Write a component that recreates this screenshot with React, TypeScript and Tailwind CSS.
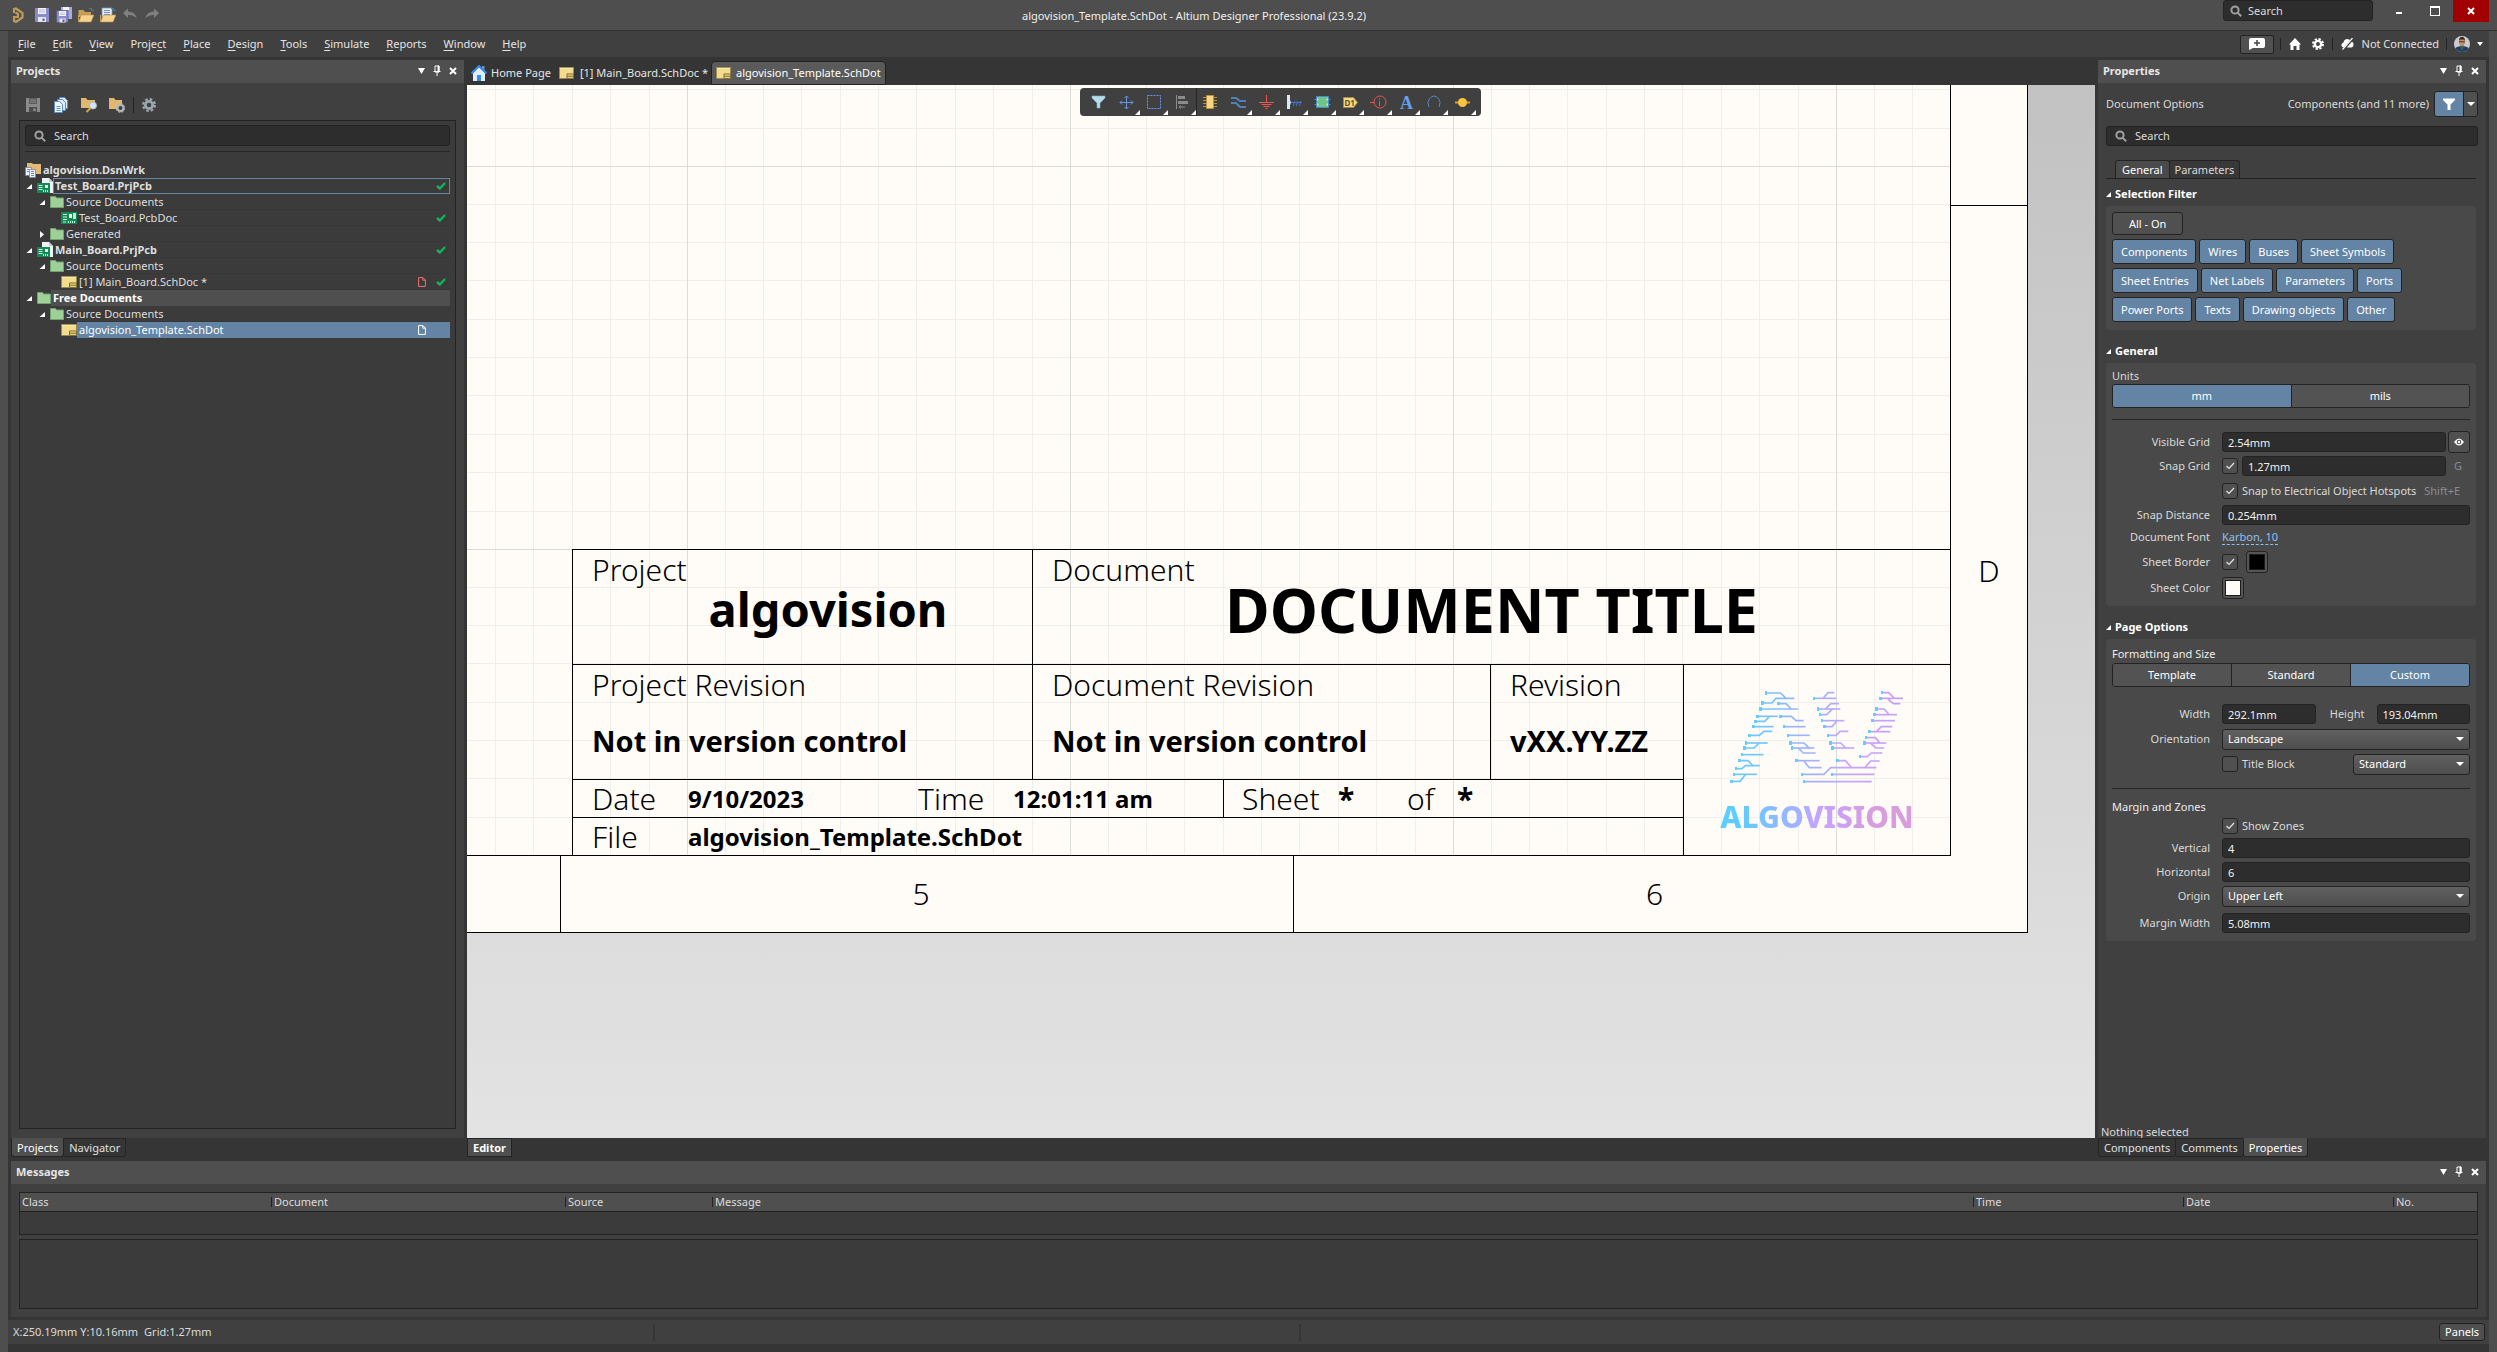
import { useId, useState, type ReactNode } from "react";

/* ---------- small glyphs ---------- */

function Caret({ className = "w-2 h-1.5" }: { className?: string }) {
  return (
    <svg className={className} viewBox="0 0 8 5" preserveAspectRatio="none">
      <path d="M0 0h8L4 5z" fill="#fff" />
    </svg>
  );
}

function Pin() {
  return (
    <svg className="h-3 w-2" viewBox="0 0 8 12">
      <path d="M2 1h4v6H2zM0.500 6.500h7M4 7v4" fill="none" stroke="#fff" />
      <path d="M5 1h1v6H5z" fill="#fff" stroke="#fff" />
    </svg>
  );
}

function Cross({ className = "size-2" }: { className?: string }) {
  return (
    <svg className={className} viewBox="0 0 8 8">
      <path d="M1 1l6 6M7 1L1 7" stroke="#fff" strokeWidth="2" />
    </svg>
  );
}

function SearchIcon({ color = "#a0a0a0" }: { color?: string }) {
  return (
    <svg className="size-3 shrink-0" viewBox="0 0 12 12" fill="none" stroke={color} strokeWidth="2">
      <circle cx="5" cy="5" r="3.600" />
      <path d="M7.600 7.600l3.600 3.600" />
    </svg>
  );
}

function Arrow({ open }: { open: boolean }) {
  return (
    <svg className="size-[7px] shrink-0" viewBox="0 0 7 7">
      <path d={open ? "M6 1v5H0.500z" : "M1 0l4 3.500L1 7z"} fill="#fff" />
    </svg>
  );
}

function Floppy({ gray = false }: { gray?: boolean }) {
  return (
    <svg className="size-4" viewBox="0 0 16 16">
      <path d="M1 1h14v14H1z" fill={gray ? "#8a8a8a" : "#8a8bc8"} />
      <path d="M4 1h8v6H4z" fill={gray ? "#5c5c5c" : "#f2f2f8"} />
      <path d="M5 3h6M5 5h6" stroke={gray ? "#8a8a8a" : "#b9b9d6"} />
      <path d="M4 10h8v5H4z" fill={gray ? "#4d4d4d" : "#e4e4f2"} />
      <path d="M8.500 11.500h2V14h-2z" fill={gray ? "#9a9a9a" : "#5e5f9c"} />
    </svg>
  );
}

function FloppyStack() {
  return (
    <svg className="size-4" viewBox="0 0 16 16">
      <path d="M5 0h11v12H5z" fill="#a9aae0" />
      <path d="M7 0h6v3H7z" fill="#f2f2f8" />
      <path d="M0.500 3.500h11.500v12H0.500z" fill="#8a8bc8" stroke="#4d4d6c" strokeWidth="0.600" />
      <path d="M3 4h7v5H3z" fill="#f2f2f8" />
      <path d="M4 6h5M4 7.500h5" stroke="#b9b9d6" strokeWidth="0.800" />
      <path d="M3.500 11.500h6v4h-6z" fill="#e4e4f2" />
      <path d="M6.500 12.500h2V15h-2z" fill="#5e5f9c" />
    </svg>
  );
}

function OpenFolder({ doc = false }: { doc?: boolean }) {
  return (
    <svg className="size-4" viewBox="0 0 16 16">
      {doc ? (
        <>
          <path d="M2 1h10v10H2z" fill="#e8eef8" stroke="#8296b8" strokeWidth="0.800" />
          <path d="M4 3.500h6M4 5.500h6M4 7.500h6" stroke="#6f8fbf" />
        </>
      ) : (
        <path d="M0.500 3h5l1.500 2h6v5h-12.500z" fill="#c99d55" />
      )}
      <path d="M3.500 8H16l-3 7H0.500z" fill="#f5d38f" stroke="#b88d45" strokeWidth="0.600" />
      <path d="M0.500 8v7" stroke="#c99d55" />
      <path d="M11 1.500q3 -1 3.500 2M12.800 2.500l1.700 1.500L16 2.500" fill="none" stroke="#4c7da6" />
    </svg>
  );
}

function Undo({ flip = false }: { flip?: boolean }) {
  return (
    <svg className={flip ? "size-4 -scale-x-100" : "size-4"} viewBox="0 0 16 16">
      <path d="M1 6l5-4.500V4.500q7 0 9 7q-4-4-9-3.500V11z" fill="#808080" />
    </svg>
  );
}

function AltiumMark() {
  return (
    <svg className="h-4 w-3" viewBox="0 0 12 16" fill="none" stroke="#bf9b5a" strokeWidth="2.200">
      <path d="M2 6V2l2-0.500 6.500 4.500v4.500L4 15l-2-1v-4h4V7L3.500 5.500" />
    </svg>
  );
}

function SchDocIcon({ className = "h-3.5 w-4" }: { className?: string }) {
  return (
    <svg className={className} viewBox="0 0 16 13" preserveAspectRatio="none">
      <path d="M0.500 0.500h15v12h-15z" fill="#f3dc8c" stroke="#9c8a52" />
      <path d="M1 1h14v1H1z" fill="#faecb5" />
      <path d="M8.500 7.500h7v5h-7zM8.500 10h7" fill="#e8cf78" stroke="#7d6c38" />
    </svg>
  );
}

function PcbIcon() {
  return (
    <svg className="h-3 w-4 shrink-0" viewBox="0 0 16 12">
      <path d="M0 0h16v12H0z" fill="#0f8b54" />
      <path d="M2 2.500h4M2 5h4M2 7.500h4M2 10h3" stroke="#d8f2e2" />
      <path d="M8 2h3v4H8z" fill="#e8f4ec" />
      <path d="M12 1h3v6h-3z" fill="#c2e8d2" />
      <path d="M7.500 9v2M9.500 9v2M11.500 9v2M13.500 9v2" stroke="#d8f2e2" />
    </svg>
  );
}

function PrjIcon() {
  return (
    <svg className="size-4 shrink-0" viewBox="0 0 16 16">
      <path d="M5 0h7l4 4v11H5z" fill="#eef1f6" />
      <path d="M12 0v4h4" fill="#c2c9d6" />
      <path d="M0 5h13v10H0z" fill="#0f8b54" />
      <path d="M1.500 7.500h4M1.500 9.500h4M1.500 11.500h4" stroke="#d8f2e2" />
      <path d="M8 7h3v3H8z" fill="#e8f4ec" />
      <path d="M6.500 12v2M8.500 12v2M10.500 12v2" stroke="#d8f2e2" />
    </svg>
  );
}

function WorkspaceIcon() {
  return (
    <svg className="size-4 shrink-0" viewBox="0 0 16 16">
      <path d="M2 1h5l1 1h8v10H2z" fill="#e5b877" />
      <path d="M0.500 5.500h6v8h-6z" fill="#eef2f8" stroke="#6d86aa" strokeWidth="0.800" />
      <path d="M4.500 7.500h6v8h-6z" fill="#eef2f8" stroke="#6d86aa" strokeWidth="0.800" />
      <path d="M6 9.500h3M6 11.500h3M6 13.500h3M2 7.500h2M2 9.500h2" stroke="#6d86aa" />
    </svg>
  );
}

function GreenFolder() {
  return (
    <svg className="h-3 w-3.5 shrink-0" viewBox="0 0 14 12">
      <path d="M0.500 0.500h5l1 1.500h7v9.500h-13z" fill="#9fd09a" stroke="#6fa46d" />
    </svg>
  );
}

function GreenCheck() {
  return (
    <svg className="h-2 w-2.5 shrink-0" viewBox="0 0 10 8">
      <path d="M1 4l2.800 2.500L9 1" fill="none" stroke="#14b35c" strokeWidth="2.400" />
    </svg>
  );
}

function PageGlyph({ color }: { color: string }) {
  return (
    <svg className="h-2.5 w-2 shrink-0" viewBox="0 0 8 10">
      <path d="M0.600 0.600H5L7.400 3v6.400H0.600zM4.800 0.600V3.200h2.600" fill="none" stroke={color} />
    </svg>
  );
}

function GearShape({ color, className = "size-3" }: { color: string; className?: string }) {
  return (
    <svg className={className} viewBox="0 0 16 16">
      <circle cx="8" cy="8" r="6.700" fill="none" stroke={color} strokeWidth="2.600" strokeDasharray="3 2.260" />
      <circle cx="8" cy="8" r="4.200" fill="none" stroke={color} strokeWidth="3.200" />
    </svg>
  );
}

function FilterGlyph({ color = "#fff", className = "size-3" }: { color?: string; className?: string }) {
  return (
    <svg className={className} viewBox="0 0 12 12">
      <path d="M0 0.500h12v1.500L7.500 6.500V12h-3V6.500L0 2z" fill={color} />
    </svg>
  );
}

/* ---------- shared pieces ---------- */

function PanelHeader({ title }: { title: string }) {
  return (
    <header className="flex h-[23px] shrink-0 items-center justify-between bg-[#4f4f4f] pb-0.5 pl-[5px] pr-[7px]">
      <h2 className="font-bold text-[#e6e6e6]">{title}</h2>
      <div className="flex items-center gap-2">
        <button aria-label="Panel menu"><Caret className="h-1.5 w-[7px]" /></button>
        <button aria-label="Pin panel"><Pin /></button>
        <button aria-label="Close panel"><Cross /></button>
      </div>
    </header>
  );
}

function SearchBox({ label, className }: { label: string; className: string }) {
  return (
    <label className={"flex items-center gap-2 rounded-[3px] border border-[#222] bg-[#2d2d2d] px-2 " + className}>
      <SearchIcon />
      <input aria-label={label} placeholder="Search" className="min-w-0 flex-1 bg-transparent outline-none placeholder:text-[#dcdcdc]" />
    </label>
  );
}

function BottomTabs({ tabs, active }: { tabs: string[]; active: string }) {
  return (
    <div className="flex h-[23px] shrink-0 items-start">
      {tabs.map((t) => (
        <button
          key={t}
          className={
            "-mr-px h-[19px] rounded-b-[3px] border border-[#242424] px-[5px] leading-[17px] " +
            (t === active ? "border-t-[#4f4f4f] bg-[#4f4f4f] text-white" : "bg-[#353535] text-[#e0e0e0]")
          }
        >
          {t}
        </button>
      ))}
    </div>
  );
}

/* ---------- title bar and menu ---------- */

const menus: [string, string, string][] = [
  ["", "F", "ile"], ["", "E", "dit"], ["", "V", "iew"], ["Proje", "c", "t"], ["", "P", "lace"], ["", "D", "esign"],
  ["", "T", "ools"], ["", "S", "imulate"], ["", "R", "eports"], ["", "W", "indow"], ["", "H", "elp"],
];

function TitleBar() {
  return (
    <header className="relative flex h-[31px] shrink-0 items-start justify-between border-b border-[#333] pl-3 pr-2">
      <div className="flex h-[30px] items-center gap-1.5">
        <button aria-label="Application menu" className="mr-1"><AltiumMark /></button>
        <button aria-label="Save"><Floppy /></button>
        <button aria-label="Save all"><FloppyStack /></button>
        <button aria-label="Open"><OpenFolder /></button>
        <button aria-label="Open project"><OpenFolder doc /></button>
        <button aria-label="Undo"><Undo /></button>
        <button aria-label="Redo"><Undo flip /></button>
      </div>
      <h1 className="pointer-events-none absolute inset-x-0 top-2 mr-[109px] text-center text-[#f0f0f0]">
        algovision_Template.SchDot - Altium Designer Professional (23.9.2)
      </h1>
      <div className="flex items-start">
        <SearchBox label="Search commands" className="h-[21px] w-[150px] !gap-1.5 !px-1.5" />
        <button aria-label="Minimize" className="ml-2 flex h-[22px] w-9 items-center justify-center pt-1">
          <span className="h-0.5 w-1.5 bg-white" />
        </button>
        <button aria-label="Maximize" className="flex h-[22px] w-9 items-center justify-center">
          <span className="h-2.5 w-2.5 border border-t-2 border-white" />
        </button>
        <button aria-label="Close" className="flex h-[22px] w-9 items-center justify-center bg-[#a00000]"><Cross /></button>
      </div>
    </header>
  );
}

function MenuBar() {
  return (
    <div className="flex h-[26px] shrink-0 items-center justify-between bg-[#404040] pl-2.5 pr-1.5">
      <nav className="flex gap-[17px] text-[#e4e4e4]">
        {menus.map(([a, u, b]) => (
          <button key={a + u + b}>
            {a}
            <span className="underline underline-offset-2">{u}</span>
            {b}
          </button>
        ))}
      </nav>
      <div className="flex items-center">
        <button aria-label="Feedback" className="flex h-[19px] w-[34px] items-center justify-center rounded-[2px] border border-[#222] bg-[#505050]">
          <svg className="h-3 w-4" viewBox="0 0 16 12">
            <path d="M2 0h12q2 0 2 2v6q0 2-2 2H4l-4 2V2q0-2 2-2z" fill="#fff" />
            <path d="M8 2v6M5 5h6" stroke="#444" strokeWidth="1.500" />
          </svg>
        </button>
        <span className="ml-1.5 h-3 w-px bg-[#222]" />
        <button aria-label="Home" className="ml-2">
          <svg className="size-3" viewBox="0 0 12 12">
            <path d="M6 0l6 6.500h-1.500V12H7.500V8h-3v4h-3V6.500H0z" fill="#fff" />
          </svg>
        </button>
        <button aria-label="Settings" className="ml-[11px]"><GearShape color="#fff" /></button>
        <span className="ml-2 h-3 w-px bg-[#222]" />
        <button className="ml-2 flex items-center gap-2 text-[#e0e0e0]">
          <svg className="h-3 w-[13px]" viewBox="0 0 13 12">
            <path d="M3 9.500Q0 9 0.500 6.500 1 5 2.500 4.500 3 1 6.500 1 9 1 9.500 3.500 12.500 3.500 12.500 6.500 12.500 9.500 10 9.500z" fill="#fff" />
            <path d="M12.500 0L2.500 11.500" stroke="#404040" strokeWidth="2.500" />
            <path d="M11.500 0L1.500 11.500" stroke="#fff" strokeWidth="1.200" />
          </svg>
          Not Connected
        </button>
        <span className="ml-[7px] h-3 w-px bg-[#222]" />
        <button aria-label="Account" className="ml-[7px] flex items-center gap-[7px]">
          <svg className="size-4" viewBox="0 0 16 16">
            <clipPath id="avatar"><circle cx="8" cy="8" r="8" /></clipPath>
            <g clipPath="url(#avatar)">
              <path d="M0 0h16v16H0z" fill="#c9cdd0" />
              <path d="M0 16q0-6 8-6t8 6z" fill="#243c66" />
              <path d="M6.500 9h3v3l-1.500 3-1.500-3z" fill="#2f6b4a" />
              <ellipse cx="8" cy="6" rx="3" ry="4" fill="#c98d6a" />
              <path d="M5 5q0-4 3-4t3 4l-1-1.500H6z" fill="#2b1f1a" />
              <path d="M5 5.800h6" stroke="#222" strokeWidth="0.800" />
            </g>
          </svg>
          <Caret className="h-1 w-1.5" />
        </button>
      </div>
    </div>
  );
}

/* ---------- projects panel ---------- */

type TreeRow = {
  label: string;
  indent: string;
  icon: ReactNode;
  arrow?: "open" | "closed";
  bold?: boolean;
  look?: "focus" | "group" | "selected";
  mark?: string;
  check?: boolean;
};

const tree: TreeRow[] = [
  { label: "algovision.DsnWrk", indent: "pl-0", icon: <WorkspaceIcon />, bold: true },
  { label: "Test_Board.PrjPcb", indent: "pl-px", icon: <PrjIcon />, arrow: "open", bold: true, look: "focus", check: true },
  { label: "Source Documents", indent: "pl-3.5", icon: <GreenFolder />, arrow: "open" },
  { label: "Test_Board.PcbDoc", indent: "pl-9", icon: <PcbIcon />, check: true },
  { label: "Generated", indent: "pl-3.5", icon: <GreenFolder />, arrow: "closed" },
  { label: "Main_Board.PrjPcb", indent: "pl-px", icon: <PrjIcon />, arrow: "open", bold: true, check: true },
  { label: "Source Documents", indent: "pl-3.5", icon: <GreenFolder />, arrow: "open" },
  { label: "[1] Main_Board.SchDoc *", indent: "pl-9", icon: <SchDocIcon className="h-3 w-4 shrink-0" />, mark: "#f07070", check: true },
  { label: "Free Documents", indent: "pl-px", icon: <GreenFolder />, arrow: "open", bold: true, look: "group" },
  { label: "Source Documents", indent: "pl-3.5", icon: <GreenFolder />, arrow: "open" },
  { label: "algovision_Template.SchDot", indent: "pl-9", icon: <SchDocIcon className="h-3 w-4 shrink-0" />, look: "selected", mark: "#ffffff" },
];

function TreeItem({ row }: { row: TreeRow }) {
  const look =
    row.look === "focus" ? "border-[#6485a5]"
    : row.look === "group" ? "border-[#4f4f4f] bg-[#4f4f4f] text-white"
    : row.look === "selected" ? "border-[#6384a4] bg-[#6384a4] text-white"
    : "border-transparent border-b-[#373737]";
  return (
    <li className={"flex h-4 items-center text-[#dedede] " + row.indent}>
      {row.arrow && <span className="mr-1 flex"><Arrow open={row.arrow === "open"} /></span>}
      {row.icon}
      <span className={"flex h-4 min-w-0 flex-1 items-center border pl-px pr-[3px] leading-[14px] " + look + (row.bold ? " font-bold" : "")}>
        <span className="flex-1">{row.label}</span>
        {row.mark && <PageGlyph color={row.mark} />}
        <span className="ml-2.5 flex w-2.5">{row.check && <GreenCheck />}</span>
      </span>
    </li>
  );
}

function ProjectsPanel() {
  return (
    <aside className="flex w-[453px] shrink-0 flex-col">
      <section className="flex flex-1 flex-col bg-[#404040]">
        <PanelHeader title="Projects" />
        <div className="flex h-[37px] items-center gap-3 pl-3.5 pt-1.5">
          <button aria-label="Save project"><Floppy gray /></button>
          <button aria-label="Compile">
            <svg className="size-4" viewBox="0 0 16 16">
              <path d="M6.500 0.500h5l3 3v8h-8z" fill="#dce9f8" stroke="#5b8fc4" />
              <path d="M4.500 2.500h5l3 3v8h-8z" fill="#dce9f8" stroke="#5b8fc4" />
              <path d="M1.500 4.500h5l3 3v8h-8z" fill="#f2f7fd" stroke="#5b8fc4" />
              <path d="M3.500 9.500h4M3.500 11.500h4M3.500 13.500h4" stroke="#5b8fc4" />
            </svg>
          </button>
          <button aria-label="Explore">
            <svg className="size-4" viewBox="0 0 16 16">
              <path d="M0 1h5l1.500 2H14v8H0z" fill="#e2b86e" />
              <circle cx="12" cy="8.500" r="3.500" fill="#d3e6f6" stroke="#a9bccb" />
              <path d="M9.500 11L5.500 15" stroke="#d6a24e" strokeWidth="2" />
            </svg>
          </button>
          <button aria-label="Project options">
            <svg className="size-4" viewBox="0 0 16 16">
              <path d="M0 1h5l1.500 2H13v9H0z" fill="#e2b86e" />
              <circle cx="11.500" cy="11" r="3" fill="#404040" stroke="#b4b9ba" strokeWidth="2" />
              <circle cx="11.500" cy="11" r="4.400" fill="none" stroke="#b4b9ba" strokeDasharray="2 1.500" />
            </svg>
          </button>
          <span className="-ml-1 h-4 w-px bg-[#222]" />
          <button aria-label="Panel settings" className="-ml-1"><GearShape color="#9aa6ad" className="size-3.5" /></button>
        </div>
        <div className="mx-2 mb-[9px] flex flex-1 flex-col border border-[#232323] bg-[#3b3b3b] px-[5px] pt-1">
          <SearchBox label="Search projects" className="h-[21px]" />
          <hr className="mb-[10px] mt-[5px] border-[#262626]" />
          <ul>
            {tree.map((row, i) => <TreeItem key={i} row={row} />)}
          </ul>
        </div>
      </section>
      <BottomTabs tabs={["Projects", "Navigator"]} active="Projects" />
    </aside>
  );
}

/* ---------- editor ---------- */

const gridSteps = [0, 38, 76, 114, 153, 191, 229, 268, 306, 345];

function SheetGrid() {
  return (
    <svg className="absolute bottom-0 right-0 h-[1149px] w-[2298px]" shapeRendering="crispEdges">
      <defs>
        <pattern id="sheet-grid" width="383" height="383" x="269" y="77" patternUnits="userSpaceOnUse">
          {gridSteps.map((s) => (
            <path key={s} d={`M${s} 0h1v383h-1zM0 ${s}h383v1H0z`} fill="#eeefeb" />
          ))}
          <path d="M0 0h1v383H0zM0 0h383v1H0z" fill="#dadcd7" />
        </pattern>
      </defs>
      <rect width="2298" height="1149" fill="url(#sheet-grid)" />
    </svg>
  );
}

const logoTraces = [
  "M342 160h44l16 16", "M332 190h28l12-14h54", "M380 192h22l16 16", "M326 208h112", "M316 230h60", "M310 245h28l14-14",
  "M386 230h32l14 13h22", "M304 261h60", "M396 261h64", "M292 287h30l14-12h24", "M408 287h64", "M282 310h64",
  "M278 325h28l14-14", "M416 310h40l14 14", "M420 325h66", "M440 326l14 14h36", "M270 345h64", "M262 363h26l14 14",
  "M252 387h18l10-9h42", "M434 363h68", "M456 365l16 19h36", "M246 404h68", "M238 425h26l16-20",
  "M486 176h66", "M514 175l14-16h18", "M498 208h66", "M522 206l14-14h24", "M504 225h20l16-16", "M510 243h66",
  "M518 261h22l14-16", "M528 287h24l12-12h24", "M536 310h30l14 14", "M542 325h64", "M450 404h66l20-20h136",
  "M556 363h24l18 20", "M640 382l16-18h26", "M540 404h126", "M456 426h202",
  "M690 159h20l16 16", "M686 176h66", "M708 178l16 14h20", "M674 208h22l14 15", "M668 225h66", "M662 243h66",
  "M674 275l14-14h32", "M652 276h62", "M642 294h28l12 14", "M638 310h64", "M656 311l16 14h24", "M624 351h22l12-11h32",
];

function AlgovisionLogo() {
  return (
    <div className="flex flex-col items-center pt-[26px]">
      <svg className="h-[92px] w-[174px]" viewBox="234 154 522 276" fill="none" stroke="url(#logo-ramp)" strokeWidth="5">
        <defs>
          <linearGradient id="logo-ramp" gradientUnits="userSpaceOnUse" x1="234" x2="756" y1="0" y2="0">
            <stop offset="0" stopColor="#66ccff" />
            <stop offset="0.200" stopColor="#72c6ff" />
            <stop offset="0.380" stopColor="#98b4ff" />
            <stop offset="0.560" stopColor="#aeaeff" />
            <stop offset="0.680" stopColor="#c8a4ff" />
            <stop offset="1" stopColor="#c79cf8" />
          </linearGradient>
          <marker id="pad" markerUnits="userSpaceOnUse" markerWidth="8" markerHeight="10" refX="4" refY="5">
            <path d="M1 1h5v8H1z" fill="context-stroke" />
          </marker>
        </defs>
        {logoTraces.map((d) => (
          <path key={d} d={d + "h1"} markerStart={/^M(514|522|440|456 365|640|708|674 275|656)/.test(d) ? undefined : "url(#pad)"} />
        ))}
      </svg>
      <div className="mt-4 bg-[linear-gradient(90deg,#5ccdff_10%,#a9b0ff_42%,#c8a2ff_52%,#d79ddd_80%)] bg-clip-text text-[30px] font-extrabold leading-9 text-transparent">
        ALGOVISION
      </div>
    </div>
  );
}

function Field({ label, value, className }: { label: string; value: string; className: string }) {
  return (
    <div className={"pl-[19px] " + className}>
      <div className="leading-10">{label}</div>
      <div className="mt-4 text-[29px] font-bold leading-10">{value}</div>
    </div>
  );
}

function TitleBlock() {
  return (
    <div className="relative flex w-[1378px] flex-col border-l border-t border-black">
      <div className="flex h-[114px]">
        <div className="w-[460px] border-r border-black pl-[19px]">
          <div className="leading-10">Project</div>
          <div className="pl-8 text-center text-[47px] font-bold leading-[38px]">algovision</div>
        </div>
        <div className="flex-1 pl-[19px]">
          <div className="leading-10">Document</div>
          <div className="-ml-[19px] text-center text-[61px] font-bold leading-10">DOCUMENT TITLE</div>
        </div>
      </div>
      <div className="flex border-t border-black">
        <div className="flex-1">
          <div className="flex h-[114px]">
            <Field label="Project Revision" value="Not in version control" className="w-[460px] border-r border-black" />
            <Field label="Document Revision" value="Not in version control" className="flex-1 border-r border-black" />
            <Field label="Revision" value="vXX.YY.ZZ" className="w-[192px]" />
          </div>
          <div className="flex h-[38px] items-center border-t border-black pl-[19px]">
            <span className="w-[96px]">Date</span>
            <span className="w-[230px] text-2xl font-bold">9/10/2023</span>
            <span className="w-[95px]">Time</span>
            <span className="w-[210px] text-2xl font-bold">12:01:11 am</span>
            <div className="flex h-full flex-1 items-center border-l border-black pl-[18px]">
              <span className="w-[96px]">Sheet</span>
              <span className="w-[69px] font-bold">*</span>
              <span className="w-[50px]">of</span>
              <span className="font-bold">*</span>
            </div>
          </div>
          <div className="flex h-[38px] items-center border-t border-black pl-[19px]">
            <span className="w-[96px]">File</span>
            <span className="text-2xl font-bold">algovision_Template.SchDot</span>
          </div>
        </div>
        <div className="w-[267px] border-l border-black">
          <AlgovisionLogo />
        </div>
      </div>
    </div>
  );
}

function Sheet() {
  return (
    <div className="mb-[205px] mr-[67px] grid flex-1 grid-cols-[1fr_76px] grid-rows-[1fr_76px] border-b border-r border-black bg-[#fffcf8] text-[30px] font-light text-black">
      <div className="relative flex flex-col items-end justify-end overflow-hidden border-b border-r border-black">
        <SheetGrid />
        <TitleBlock />
      </div>
      <div className="flex flex-col">
        <div className="h-[121px] border-b border-black" />
        <div className="flex flex-1 items-center justify-center pt-20">D</div>
      </div>
      <div className="col-span-2 flex">
        <div className="flex-1 border-r border-black" />
        <div className="flex w-[733px] items-center justify-center border-r border-black pr-3">5</div>
        <div className="flex w-[733px] items-center justify-center pr-3">6</div>
      </div>
    </div>
  );
}

const tools: { name: string; icon: ReactNode; menu: boolean }[] = [
  { name: "Filter", menu: false, icon: <path d="M2 2h13v2l-5 5v5H7V9L2 4z" fill="#b8dcea" stroke="#7fb0c6" strokeWidth="0.600" /> },
  { name: "Move", menu: true, icon: <path d="M8.500 2v13M2 8.500h13M6.500 4l2-2 2 2M6.500 13l2 2 2-2M4 6.500l-2 2 2 2M13 6.500l2 2-2 2" fill="none" stroke="#6b92e0" /> },
  { name: "Select", menu: true, icon: <path d="M1.500 1.500h13v13h-13z" fill="none" stroke="#6c92f2" strokeDasharray="2 1" /> },
  { name: "Align", menu: true, icon: <g fill="#8b8b8b"><path d="M2 1h1v14H2zM4 2h7v3H4zM4 7h10v3H4z" /><path d="M5 13h6M7 11.500L5 13l2 1.500" fill="none" stroke="#8b8b8b" /></g> },
  { name: "Place part", menu: false, icon: <g><path d="M1 3.500h14M1 6.500h14M1 9.500h14M1 12.500h14" stroke="#b6933c" /><path d="M4.500 1.500h7v13h-7z" fill="#f8d684" stroke="#b6933c" /></g> },
  { name: "Wire", menu: true, icon: <path d="M1 4h5l4 3h6M1 9h5l4 4h6" fill="none" stroke="#4e83b8" strokeWidth="2" /> },
  { name: "Power port", menu: true, icon: <path d="M8.500 1v7M1 8.500h15M3.500 10.500h10M5.500 12.500h6M7.500 14.500h2" fill="none" stroke="#f0544f" /> },
  { name: "Harness", menu: true, icon: <g><path d="M1 1h3v5l1 2.500L4 11v4H1z" fill="#d9e8fb" /><path d="M5 8.500h11M8.500 7l-1 5M11.500 7l-1 5M14.500 7l-1 5" fill="none" stroke="#3f74cf" /></g> },
  { name: "Sheet symbol", menu: true, icon: <g><path d="M2.500 2.500h12v11h-12z" fill="#6cc68a" stroke="#4a8ad0" /><path d="M0.500 5.500h16M0.500 10.500h16" stroke="#4a8ad0" strokeDasharray="3 10" /><path d="M3 4l2 1.500L3 7M3 9l2 1.500L3 12M14 4l-2 1.500L14 7M14 9l-2 1.500 2 1.500" fill="#f1e06a" /></g> },
  { name: "Port", menu: true, icon: <g><path d="M1.500 3.500h10l4 5-4 5h-10z" fill="#f3d98b" stroke="#a98b3f" /><text x="2.500" y="11.500" fontSize="8" fontWeight="700" fill="#6b5317">D1</text></g> },
  { name: "Directive", menu: true, icon: <g fill="none" stroke="#e45454"><circle cx="10" cy="8" r="6" /><path d="M0 8.500h4M9.500 7v5M9.500 4v1.500" /></g> },
  { name: "Text", menu: true, icon: <text x="2" y="15" fontSize="18" fontWeight="700" fontFamily="Liberation Serif, serif" fill="#66a0ea">A</text> },
  { name: "Arc", menu: true, icon: <path d="M3 13Q0.500 8 3.500 4.500 8-0.500 12.500 4.500 15.500 8 13 13" fill="none" stroke="#5688c4" /> },
  { name: "Connection", menu: true, icon: <g><path d="M1 8.500h15" stroke="#e59a2c" strokeWidth="2" /><circle cx="8.500" cy="8.500" r="4.500" fill="#f9c440" /></g> },
];

function FloatingToolbar() {
  return (
    <div role="toolbar" className="absolute left-[613px] top-[3px] flex h-7 w-[401px] items-stretch rounded bg-[#404040] pl-1">
      {tools.map((t) => (
        <button key={t.name} aria-label={t.name} className={"relative flex w-7 items-center justify-center" + (t.name === "Place part" ? " border-l border-[#252525]" : "")}>
          <svg className="size-[17px]" viewBox="0 0 17 17">{t.icon}</svg>
          {t.menu && (
            <svg className="absolute bottom-px right-0 size-[5px]" viewBox="0 0 5 5"><path d="M5 0v5H0z" fill="#fff" /></svg>
          )}
        </button>
      ))}
    </div>
  );
}

function Editor() {
  return (
    <main className="flex min-w-0 flex-1 flex-col">
      <div className="flex h-[25px] shrink-0 items-center whitespace-nowrap pl-1 text-[#e6e6e6]">
        <button className="flex h-6 items-center gap-1 pr-2">
          <svg className="size-4" viewBox="0 0 16 16">
            <path d="M11 1h2.500v5H11z" fill="#7d8fa5" />
            <path d="M2 8l6-6 6 6v8H2z" fill="#e3edf8" />
            <path d="M0.500 8.500L8 1l7.500 7.500" fill="none" stroke="#2f8cf0" strokeWidth="2" />
            <path d="M6 10h4v6H6z" fill="#2f8cf0" />
          </svg>
          Home Page
        </button>
        <button className="flex h-6 items-center gap-1.5 pr-[3px]"><SchDocIcon className="h-3 w-[15px]" />[1] Main_Board.SchDoc *</button>
        <button className="flex h-6 items-center gap-[5px] rounded-t border border-[#222] bg-[#5a5a5a] px-1 text-white">
          <SchDocIcon className="h-3 w-[15px]" />
          <span>algovision_Template.SchDot</span>
        </button>
      </div>
      <div className="relative flex flex-1 flex-col bg-linear-to-b from-[#c2c2c2] to-[#e3e3e3]">
        <Sheet />
        <FloatingToolbar />
      </div>
      <div className="h-[23px] shrink-0">
        <button className="h-[19px] border border-[#242424] bg-[#4f4f4f] px-[5px] font-bold leading-[17px] text-white">Editor</button>
      </div>
    </main>
  );
}

/* ---------- properties panel ---------- */

function SectionTitle({ children, className = "h-[33px]" }: { children: string; className?: string }) {
  return (
    <button className={"flex items-end pb-1 " + className}>
      <span className="flex items-center gap-1 font-bold leading-4 text-white">
        <svg className="size-[5px]" viewBox="0 0 5 5"><path d="M5 0v5H0z" fill="#fff" /></svg>
        {children}
      </span>
    </button>
  );
}

function Segmented({ options, initial }: { options: string[]; initial: string }) {
  const [value, setValue] = useState(initial);
  return (
    <div className="flex h-6 overflow-hidden rounded-[3px] border border-[#232323] bg-[#535353]">
      {options.map((o) => (
        <button
          key={o}
          onClick={() => setValue(o)}
          className={"flex-1 border-l border-[#232323] text-white first:border-l-0 " + (o === value ? "bg-[#6384a4]" : "bg-[#535353]")}
        >
          {o}
        </button>
      ))}
    </div>
  );
}

const inputLook = "h-5 min-w-0 rounded-[3px] border border-[#232323] bg-[#2d2d2d] px-[5px] text-[#f0f0f0] outline-none";

function Row({ label, htmlFor, className = "h-6", children }: { label?: string; htmlFor?: string; className?: string; children: ReactNode }) {
  return (
    <div className={"grid grid-cols-[98px_1fr] items-center gap-3 " + className}>
      {label ? <label htmlFor={htmlFor} className="text-right">{label}</label> : <span />}
      <div className="flex min-w-0 items-center">{children}</div>
    </div>
  );
}

function TextRow({ label, value, className }: { label: string; value: string; className?: string }) {
  const id = useId();
  return (
    <Row label={label} htmlFor={id} className={className}>
      <input id={id} defaultValue={value} className={inputLook + " flex-1"} />
    </Row>
  );
}

function Check({ id, label, checked = false }: { id?: string; label?: string; checked?: boolean }) {
  return (
    <label className="flex items-center gap-1">
      <span className="relative flex size-4">
        <input id={id} type="checkbox" defaultChecked={checked} className="peer size-4 appearance-none rounded-[3px] border border-[#232323] bg-[#505050]" />
        <svg className="pointer-events-none absolute inset-0 hidden size-4 peer-checked:block" viewBox="0 0 16 16">
          <path d="M4.500 8l2.500 2.500 5-5.500" fill="none" stroke="#e6e6e6" strokeWidth="1.200" />
        </svg>
      </span>
      {label}
    </label>
  );
}

function Select({ id, value, label, className }: { id?: string; value: string; label?: string; className: string }) {
  return (
    <span className={"relative flex items-center " + className}>
      <select id={id} aria-label={label} className="h-[21px] w-full appearance-none rounded-[3px] border border-[#232323] bg-linear-to-b from-[#606060] to-[#4e4e4e] px-[5px] text-white">
        <option>{value}</option>
      </select>
      <span className="pointer-events-none absolute right-1.5 flex"><Caret className="h-1 w-2" /></span>
    </span>
  );
}

function Swatch({ id, label, color }: { id?: string; label: string; color: string }) {
  return (
    <button id={id} aria-label={label} className="flex size-[22px] items-center justify-center rounded-[3px] border border-[#232323] bg-[#555]">
      <span className={"size-4 border border-[#1c1c1c] " + color} />
    </button>
  );
}

const filters = [
  ["Components", "Wires", "Buses", "Sheet Symbols"],
  ["Sheet Entries", "Net Labels", "Parameters", "Ports"],
  ["Power Ports", "Texts", "Drawing objects", "Other"],
];

function PropertiesPanel() {
  return (
    <aside className="flex w-[388px] shrink-0 flex-col">
      <section className="flex flex-1 flex-col bg-[#404040] text-[#dadada]">
        <PanelHeader title="Properties" />
        <div className="flex flex-1 flex-col pl-2 pr-[10px] pt-2">
          <div className="-mr-0.5 flex h-[26px] items-center">
            <span className="flex-1">Document Options</span>
            <span className="mr-[5px]">Components (and 11 more)</span>
            <div className="flex h-full overflow-hidden rounded-[3px] border border-[#232323]">
              <button aria-label="Filter objects" className="flex w-7 items-center justify-center bg-[#6384a4]"><FilterGlyph /></button>
              <button aria-label="Filter menu" className="flex w-3.5 items-center justify-center border-l border-[#232323] bg-[#505050]"><Caret className="h-1 w-2" /></button>
            </div>
          </div>
          <SearchBox label="Search properties" className="-mr-0.5 mt-[9px] h-5" />
          <div className="mt-3.5 flex h-[19px] border-b border-[#232323] pl-[9px]">
            <button className="h-[18px] rounded-t-[3px] border border-b-0 border-[#232323] bg-[#4a4a4a] px-1.5 text-white">General</button>
            <button className="-ml-px h-[18px] rounded-t-[3px] border border-b-0 border-[#232323] bg-[#383838] px-[5px]">Parameters</button>
          </div>

          <SectionTitle className="h-[27px]">Selection Filter</SectionTitle>
          <div className="flex flex-col items-start gap-1 rounded bg-[#494949] p-1.5 pb-2 text-white">
            <button className="h-[23px] rounded-[3px] border border-[#232323] bg-[#505050] px-4">All - On</button>
            {filters.map((row) => (
              <div key={row[0]} className="flex gap-[3px]">
                {row.map((f) => (
                  <button key={f} className="h-[25px] rounded-[3px] border border-[#232323] bg-[#6384a4] px-2">{f}</button>
                ))}
              </div>
            ))}
          </div>

          <SectionTitle>General</SectionTitle>
          <div className="flex flex-col rounded bg-[#494949] px-1.5 pb-[7px] pt-1">
            <span className="leading-[17px]">Units</span>
            <Segmented options={["mm", "mils"]} initial="mm" />
            <hr className="mb-2.5 mt-[11px] border-[#262626]" />
            <Row label="Visible Grid" htmlFor="visible-grid">
              <input id="visible-grid" defaultValue="2.54mm" className={inputLook + " flex-1"} />
              <button aria-label="Toggle grid visibility" className="ml-0.5 flex size-[22px] items-center justify-center rounded-[3px] border border-[#232323] bg-[#505050]">
                <svg className="h-2 w-2.5" viewBox="0 0 10 8">
                  <path d="M0 4Q5-3 10 4 5 11 0 4z" fill="#fff" />
                  <circle cx="5" cy="4" r="2.300" fill="#505050" /><circle cx="5" cy="4" r="1.200" fill="#fff" />
                </svg>
              </button>
            </Row>
            <Row label="Snap Grid" htmlFor="snap-grid">
              <Check id="snap-grid-on" checked />
              <input id="snap-grid" defaultValue="1.27mm" className={inputLook + " ml-1 flex-1"} />
              <span className="w-6 pl-2 text-[#8c8c8c]">G</span>
            </Row>
            <Row className="h-[25px]">
              <span className="whitespace-nowrap"><Check label="Snap to Electrical Object Hotspots" checked /></span>
              <span className="ml-2 shrink-0 whitespace-nowrap text-[#8c8c8c]">Shift+E</span>
            </Row>
            <TextRow label="Snap Distance" value="0.254mm" />
            <Row label="Document Font" className="h-5">
              <a href="#font" className="border-b border-dashed border-[#8fc0ee] leading-[14px] text-[#8fc0ee]">Karbon, 10</a>
            </Row>
            <Row label="Sheet Border" htmlFor="sheet-border" className="h-[30px]">
              <Check id="sheet-border" checked />
              <span className="ml-2 flex"><Swatch label="Sheet border color" color="bg-black" /></span>
            </Row>
            <Row label="Sheet Color" htmlFor="sheet-color" className="h-[22px]">
              <Swatch id="sheet-color" label="Sheet color" color="bg-[#fffcf8]" />
            </Row>
          </div>

          <SectionTitle>Page Options</SectionTitle>
          <div className="flex flex-col rounded bg-[#494949] px-1.5 pb-1.5 pt-1.5">
            <span className="leading-[18px] text-[#ededed]">Formatting and Size</span>
            <Segmented options={["Template", "Standard", "Custom"]} initial="Custom" />
            <div className="mt-[15px] flex flex-col gap-px">
              <Row label="Width" htmlFor="page-width">
                <input id="page-width" defaultValue="292.1mm" className={inputLook + " flex-1"} />
                <label htmlFor="page-height" className="w-[61px] pr-3 text-right">Height</label>
                <input id="page-height" defaultValue="193.04mm" className={inputLook + " flex-1"} />
              </Row>
              <Row label="Orientation" htmlFor="orientation"><Select id="orientation" value="Landscape" className="flex-1" /></Row>
              <Row>
                <span className="flex-1"><Check label="Title Block" /></span>
                <Select label="Title block style" value="Standard" className="w-[117px]" />
              </Row>
            </div>
            <hr className="mb-2.5 mt-3 border-[#262626]" />
            <span className="leading-4 text-[#ededed]">Margin and Zones</span>
            <Row className="h-[21px]"><Check label="Show Zones" checked /></Row>
            <TextRow label="Vertical" value="4" />
            <TextRow label="Horizontal" value="6" />
            <Row label="Origin" htmlFor="origin"><Select id="origin" value="Upper Left" className="flex-1" /></Row>
            <TextRow label="Margin Width" value="5.08mm" className="mt-[3px] h-6" />
          </div>
        </div>
        <p className="pl-[3px] leading-[13px]">Nothing selected</p>
      </section>
      <BottomTabs tabs={["Components", "Comments", "Properties"]} active="Properties" />
    </aside>
  );
}

/* ---------- messages and status ---------- */

const columns: [string, string][] = [
  ["Class", "w-[251px]"], ["Document", "w-[294px]"], ["Source", "w-[147px]"], ["Message", ""],
  ["Time", "w-[210px]"], ["Date", "w-[210px]"], ["No.", "w-[84px]"],
];

function MessagesPanel() {
  return (
    <section className="mx-[3px] flex shrink-0 flex-col bg-[#404040]">
      <PanelHeader title="Messages" />
      <div className="px-2 pb-2 pt-2">
        <div className="h-[43px] border border-[#222] bg-[#3b3b3b]">
          <table className="w-full table-fixed border-collapse">
            <thead>
              <tr className="h-[18px] border-b border-[#222] bg-[#4f4f4f]">
                {columns.map(([name, w], i) => (
                  <th key={name} className={"p-0 text-left font-normal leading-4 text-[#dcdcdc] " + w}>
                    <span className={"flex h-2.5 items-center pl-0.5 " + (i ? "border-l border-[#222]" : "")}>{name}</span>
                  </th>
                ))}
              </tr>
            </thead>
          </table>
        </div>
        <div className="mt-1 h-[70px] border border-[#222] bg-[#3b3b3b]" />
      </div>
    </section>
  );
}

function StatusBar() {
  return (
    <footer className="mb-2 mt-[3px] flex h-6 shrink-0 items-center bg-[#404040] pl-[5px] pr-1 text-[#dcdcdc]">
      <span className="mr-1.5">X:250.19mm Y:10.16mm</span>
      <span className="w-[509px]">Grid:1.27mm</span>
      <span className="h-[17px] w-0.5 bg-[#353535]" />
      <span className="w-[644px]" />
      <span className="h-[17px] w-0.5 bg-[#353535]" />
      <button className="ml-auto h-[18px] rounded-[3px] border border-[#222] bg-[#4f4f4f] px-[5px] leading-4 text-white">Panels</button>
    </footer>
  );
}

export default function App() {
  return (
    <div className="flex min-h-screen flex-col bg-[#4e4e4e] font-['Noto_Sans',sans-serif] text-[11px] leading-4">
      <TitleBar />
      <div className="mx-2 flex flex-1 flex-col bg-[#353535]">
        <MenuBar />
        <div className="mt-[3px] flex flex-1 gap-[3px] px-[3px]">
          <ProjectsPanel />
          <Editor />
          <PropertiesPanel />
        </div>
        <MessagesPanel />
        <StatusBar />
      </div>
    </div>
  );
}
